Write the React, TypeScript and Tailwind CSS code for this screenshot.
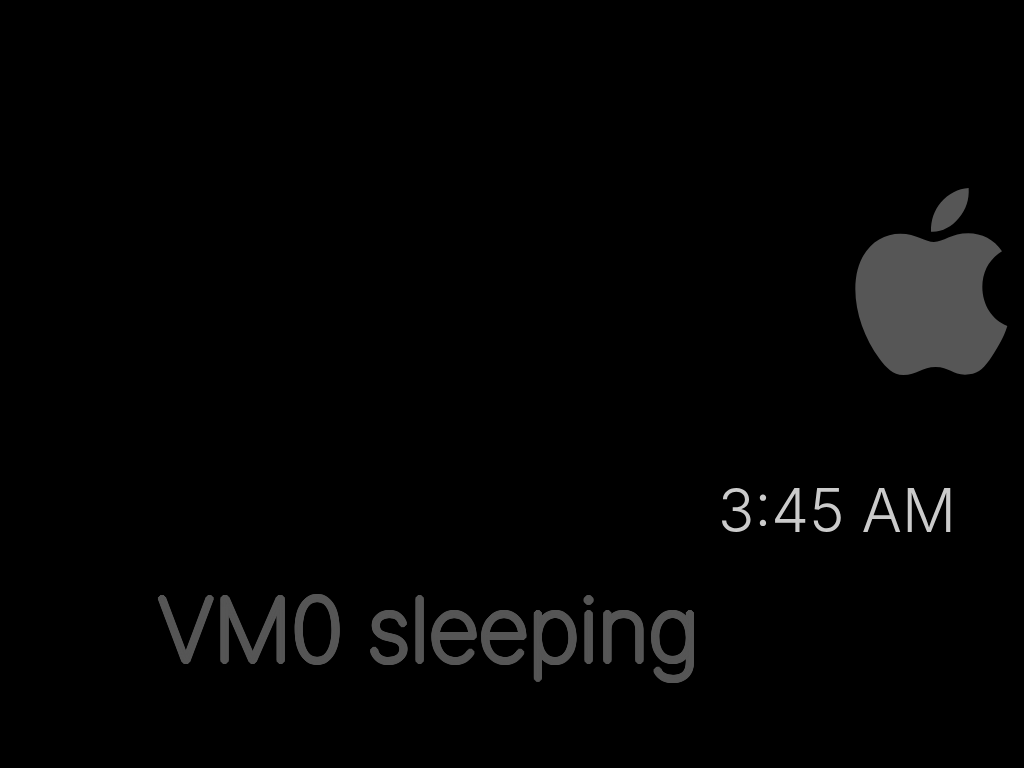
function AppleLogo() {
    return (
        <svg viewBox="45 38 459 567" className="h-[189px] w-[153px] fill-[#565656]" role="img" aria-label="Apple">
            <path d="M386 41C388 76 378 106 356 132C334 159 304 174 273 172C272 137 283 108 303 84C325 58 354 43 386 41Z" />
            <path d="M282 203C310 203 335 177 385 177C424 177 464 196 486 231C449 253 427 291 427 338C427 392 457 437 502 455C491 491 470 525 448 558C427 586 411 601 375 601C339 601 326 578 287 578C247 578 230 602 190 602C158 602 139 580 119 554C74 494 46 416 46 345C46 236 109 178 181 178C229 178 257 203 282 203Z" />
        </svg>
    );
}

export default function App() {
    return (
        <main className="flex min-h-screen flex-col bg-black font-['Inter',sans-serif]">
            <div className="flex justify-end pt-[187px] pr-4">
                <AppleLogo />
            </div>
            <time dateTime="03:45" className="mt-[102px] pr-[68px] text-right text-[60px] leading-[64px] font-light text-[#cbcbcb]">
                3:45 AM
            </time>
            {/* a thin face thickened by a ring of shadows, so that the stroke ends come out round */}
            <h1 className="mt-9 pl-[158px] text-[87px] leading-[104px] font-thin whitespace-nowrap text-[#565656] [text-shadow:3px_0_#565656,3px_1px_#565656,2px_2px_#565656,1px_3px_#565656,0_3px_#565656,-1px_3px_#565656,-2px_2px_#565656,-3px_1px_#565656,-3px_0_#565656,-3px_-1px_#565656,-2px_-2px_#565656,-1px_-3px_#565656,0_-3px_#565656,1px_-3px_#565656,2px_-2px_#565656,3px_-1px_#565656,1px_1px_#565656,-1px_-1px_#565656,1px_-1px_#565656,-1px_1px_#565656]">
                VM0 sleeping
            </h1>
        </main>
    );
}
